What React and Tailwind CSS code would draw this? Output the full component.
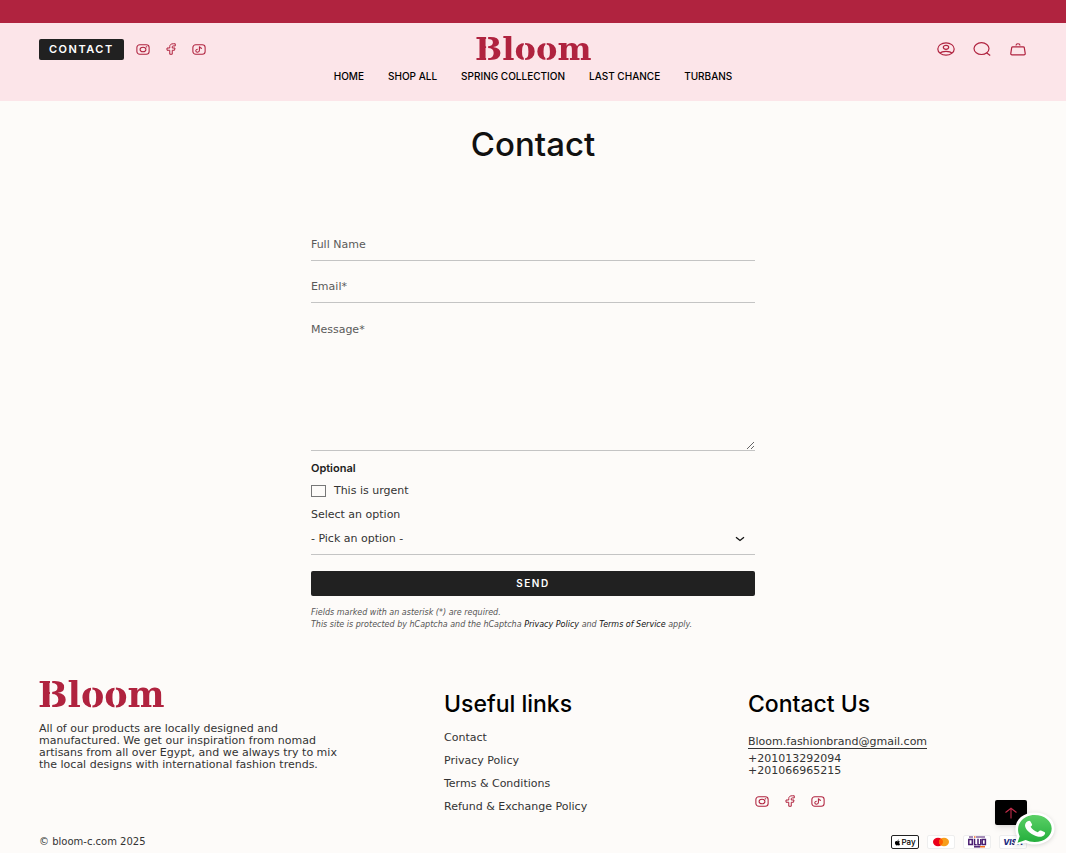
import React from "react";
import { FaApple } from "react-icons/fa";

const BRAND = "#b0233f";

function Logo({ className }) {
  return (
    <svg viewBox="0 0 124 28" className={`overflow-visible ${className}`} role="img" aria-label="Bloom">
      <mask id="stencil" maskUnits="userSpaceOnUse" x="-4" y="-8" width="140" height="46">
        <rect x="-4" y="-8" width="140" height="46" fill="#fff" />
        <rect x="11" y="-2" width="2.2" height="32" fill="#000" />
        <rect x="52" y="-2" width="1.4" height="32" fill="#000" />
        <rect x="75.500" y="-2" width="1.4" height="32" fill="#000" />
      </mask>
      <g mask="url(#stencil)">
        <text
          x="-1"
          y="26"
          fill={BRAND}
          fontFamily="DejaVu Serif, serif"
          fontWeight="700"
          fontSize="35"
        >
          Bloom
        </text>
      </g>
    </svg>
  );
}

function Instagram() {
  return (
    <svg viewBox="0 0 24 20" className="h-[11px] w-[14px]" fill="none" stroke={BRAND} strokeWidth="1.8" preserveAspectRatio="none">
      <rect x="1.5" y="1.5" width="21" height="17" rx="5" />
      <ellipse cx="12" cy="10" rx="5" ry="4.2" />
      <circle cx="18" cy="5" r="0.4" />
    </svg>
  );
}

function Facebook() {
  return (
    <svg viewBox="0 0 20 24" className="h-3 w-[10px]" fill="none" stroke={BRAND} strokeWidth="2" strokeLinejoin="round" preserveAspectRatio="none">
      <path d="M18.5 1.5h-4C10 1.500 7.500 3.500 7.500 7v3H2v4.500h5.500v8h5v-8H17l1-4.500h-5.500V7.500c0-1 .8-1.600 2-1.600h4z" />
    </svg>
  );
}

function Tiktok() {
  return (
    <svg viewBox="0 0 24 20" className="h-[11px] w-[14px]" fill="none" stroke={BRAND} strokeWidth="1.8" preserveAspectRatio="none">
      <rect x="1.500" y="1.500" width="21" height="17" rx="5" />
      <path d="M9.800 9.500C7.500 9.500 6.500 11 6.500 12.400c0 1.500 1.200 2.600 3 2.600 2 0 3.200-1.200 3.200-3V4.500c.5 2.200 2 3.400 4.500 3.500" />
    </svg>
  );
}

function Socials({ className }) {
  return (
    <div className={`flex items-center ${className}`}>
      <a href="#instagram" aria-label="Instagram"><Instagram /></a>
      <a href="#facebook" aria-label="Facebook"><Facebook /></a>
      <a href="#tiktok" aria-label="TikTok"><Tiktok /></a>
    </div>
  );
}

function Header() {
  return (
    <header className="bg-[#fce5e9] px-[39px] pt-[13px] pb-[18px] font-['Inter',sans-serif]">
      <div className="grid grid-cols-[1fr_auto_1fr] items-center">
        <div className="flex items-center gap-3">
          <a
            href="#contact"
            className="flex h-[21px] items-center rounded-xs bg-[#212121] px-[10px] text-[11px] font-semibold tracking-[1.5px] text-white"
          >
            CONTACT
          </a>
          <Socials className="gap-4" />
        </div>
        <a href="#home"><Logo className="h-[26px] w-[114px]" /></a>
        <div className="flex items-center justify-end gap-[18px]">
          <a href="#account" aria-label="Account">
            <svg viewBox="0 0 18 14" className="h-[14px] w-[18px]" fill="none" stroke={BRAND} strokeWidth="1.2">
              <ellipse cx="9" cy="7" rx="8.200" ry="6.200" />
              <ellipse cx="9" cy="5.300" rx="2.700" ry="2" />
              <path d="M3 11.200C5 8.800 13 8.800 15 11.200" />
            </svg>
          </a>
          <button type="button" aria-label="Search">
            <svg viewBox="0 0 18 14" className="h-[14px] w-[18px]" fill="none" stroke={BRAND} strokeWidth="1.2">
              <ellipse cx="8.500" cy="6.600" rx="7.500" ry="5.900" />
              <path d="M13.500 10.800L17.200 13.500" />
            </svg>
          </button>
          <button type="button" aria-label="Cart">
            <svg viewBox="0 0 18 14" className="h-[14px] w-[18px]" fill="none" stroke={BRAND} strokeWidth="1.2" strokeLinejoin="round">
              <path d="M3.800 4.800h10.400c.7 0 1 .3 1.100.9l.9 5.700c.1.900-.3 1.400-1.200 1.400H3c-.9 0-1.300-.5-1.200-1.400l.9-5.700c.1-.6.4-.9 1.100-.9z" />
              <path d="M7 3.400C7 1.200 11 1.200 11 3.400" />
            </svg>
          </button>
        </div>
      </div>
      <nav className="mt-[7px] flex justify-center gap-6 text-[10px] leading-[14px] font-medium text-black">
        <a href="#home">HOME</a>
        <a href="#shop">SHOP ALL</a>
        <a href="#spring">SPRING COLLECTION</a>
        <a href="#last">LAST CHANCE</a>
        <a href="#turbans">TURBANS</a>
      </nav>
    </header>
  );
}

const field =
  "block w-full border-b border-[#c4c4c4] bg-transparent text-[11px] leading-4 outline-none placeholder:text-[#5a5a5a] placeholder:opacity-100";

function ContactForm() {
  return (
    <form className="mx-auto mt-[66px] w-5/12 min-w-[300px]" onSubmit={(e) => e.preventDefault()}>
      <input aria-label="Full Name" type="text" placeholder="Full Name" className={`${field} h-8`} />
      <input aria-label="Email" type="email" placeholder="Email*" className={`${field} mt-[10px] h-8`} />
      <textarea aria-label="Message" placeholder="Message*" className={`${field} mt-[10px] h-[138px] resize-y pt-[9px]`} />
      <p className="mt-[9px] font-['Inter',sans-serif] text-[11px] leading-4 font-semibold text-[#212121]">Optional</p>
      <div className="mt-[7px] flex items-center gap-2">
        <input
          id="urgent"
          type="checkbox"
          className="h-3 w-[15px] appearance-none border border-[#777777] bg-transparent checked:bg-[#212121]"
        />
        <label htmlFor="urgent" className="text-[11px] leading-4">This is urgent</label>
      </div>
      <label htmlFor="option" className="mt-2 block text-[11px] leading-4">Select an option</label>
      <div className="relative">
        <select id="option" className={`${field} h-8 appearance-none`}>
          <option>- Pick an option -</option>
        </select>
        <svg viewBox="0 0 10 6" className="pointer-events-none absolute top-[13px] right-[10px] h-[6px] w-[10px]" fill="none" stroke="#111" strokeWidth="1.3">
          <path d="M1 1.200L5 4.500L9 1.200" />
        </svg>
      </div>
      <button type="submit" className="mt-4 h-[25px] w-full rounded-xs bg-[#212121] font-['Inter',sans-serif] text-[10px] font-semibold tracking-[1.5px] text-white">
        SEND
      </button>
      <p className="mt-[11px] text-[8px] leading-[12px] text-[#555] italic">
        Fields marked with an asterisk (*) are required.
        <br />
        This site is protected by hCaptcha and the hCaptcha{" "}
        <a href="#privacy" className="text-[#111]">Privacy Policy</a> and{" "}
        <a href="#terms" className="text-[#111]">Terms of Service</a> apply.
      </p>
    </form>
  );
}

function Payments() {
  return (
    <div className="flex items-center gap-2 font-['Inter',sans-serif]">
      <span className="flex h-[14px] w-7 items-center justify-center rounded-xs border border-[#222] bg-white text-[8px] font-medium text-black">
        <FaApple className="h-[7px] w-[7px]" />
        Pay
      </span>
      <svg viewBox="0 0 28 14" className="h-[14px] w-7" role="img" aria-label="Mastercard">
        <rect x="0.500" y="0.500" width="27" height="13" rx="1.500" fill="#fff" stroke="#eeeeee" />
        <ellipse cx="11" cy="7" rx="5" ry="4.200" fill="#eb001b" />
        <ellipse cx="17" cy="7" rx="5" ry="4.200" fill="#f79e1b" />
        <path d="M14 3.600c2.700 1.800 2.700 5 0 6.800-2.700-1.800-2.700-5 0-6.800z" fill="#ff5f00" />
      </svg>
      <svg viewBox="0 0 28 14" className="h-[14px] w-7" role="img" aria-label="Meeza">
        <rect x="0.500" y="0.500" width="27" height="13" rx="1.500" fill="#fff" stroke="#eeeeee" />
        <g fill="none" stroke="#4a1d70" strokeWidth="1.500">
          <path d="M6 2h4M13 2h9" strokeWidth="1" />
          <rect x="5.800" y="4.500" width="3.500" height="5" />
          <path d="M11.500 3.800v6h2.200M15 3.800v6h2.800M17.800 4v5.800" />
          <rect x="19.200" y="4.500" width="3.200" height="5" />
          <path d="M11 11.800h6" />
        </g>
        <path d="M17 11.800h5M11 2h1.500" stroke="#f26b21" strokeWidth="1.500" />
      </svg>
      <span className="flex h-[14px] w-7 items-center justify-center rounded-xs border border-[#eeeeee] bg-white text-[8px] font-extrabold text-[#1a2b80] italic">
        VISA
      </span>
    </div>
  );
}

const heading = "font-['Inter',sans-serif] text-[23px] leading-6 font-medium text-black";

function Footer() {
  return (
    <footer className="px-[39px] pt-[50px] pb-1">
      <div className="grid grid-cols-[405fr_304fr_279fr]">
        <div>
          <Logo className="h-7 w-[124px]" />
          <p className="mt-[14px] max-w-[300px] text-[11px] leading-[12px]">
            All of our products are locally designed and manufactured. We get our inspiration from nomad artisans from all over Egypt, and we always try to mix the local designs with international fashion trends.
          </p>
        </div>
        <div className="pt-[11px]">
          <h2 className={heading}>Useful links</h2>
          <ul className="mt-[14px] flex flex-col gap-[7px] text-[11px] leading-4">
            <li><a href="#contact">Contact</a></li>
            <li><a href="#privacy">Privacy Policy</a></li>
            <li><a href="#terms">Terms &amp; Conditions</a></li>
            <li><a href="#refund">Refund &amp; Exchange Policy</a></li>
          </ul>
        </div>
        <div className="pt-[11px]">
          <h2 className={heading}>Contact Us</h2>
          <div className="mt-5 text-[11px] leading-[12px]">
            <a href="mailto:Bloom.fashionbrand@gmail.com" className="inline-block border-b border-[#333]">
              Bloom.fashionbrand@gmail.com
            </a>
            <p className="mt-1">+201013292094</p>
            <p>+201066965215</p>
          </div>
          <Socials className="mt-[18px] gap-4 pl-[7px]" />
        </div>
      </div>
      <div className="mt-5 flex items-center justify-between">
        <p className="text-[10px] leading-[14px]">© bloom-c.com 2025</p>
        <Payments />
      </div>
    </footer>
  );
}

function FloatingActions() {
  return (
    <>
      <button
        type="button"
        aria-label="Back to top"
        className="fixed right-[39px] bottom-7 flex h-[25px] w-8 items-center justify-center rounded-xs bg-black shadow-md"
      >
        <svg viewBox="0 0 14 12" className="h-3 w-[14px]" fill="none" stroke="#c22d4a" strokeWidth="1.100">
          <path d="M7 11.500V1.500M1.500 5.500L7 1.300l5.500 4.200" />
        </svg>
      </button>
      <a href="#whatsapp" aria-label="WhatsApp" className="fixed right-[11px] bottom-[7px] drop-shadow-sm">
        <svg viewBox="0 0 42 34" className="h-[34px] w-[42px]">
          <defs>
            <linearGradient id="wa" x1="0" y1="0" x2="0" y2="1">
              <stop offset="0" stopColor="#5bd066" />
              <stop offset="1" stopColor="#23ae3c" />
            </linearGradient>
          </defs>
          <path d="M1 33.500l3-9C-1.500 11 8 .5 21.500.5 33 .5 41.500 7.500 41.500 16.500S33 32.500 21.500 32.500c-3.500 0-6.500-.6-9.200-1.800z" fill="#fff" />
          <path d="M4.500 30.800l2.200-6.600C1.500 13 10 3 21.500 3 31.500 3 38.700 9 38.700 16.500S31.500 30 21.500 30c-3.300 0-6.200-.7-8.800-2z" fill="url(#wa)" />
          <path d="M14.600 9.300c1.300-.8 2.300-.7 2.900.3l1.500 2.600c.4.800-.1 1.500-1.400 2.600 1.500 2.600 4 4.300 7.200 5.500 1.500-1.600 2.200-2.200 3.200-1.800l3.400 1.500c1.100.6.9 1.600-.1 2.900-1.400 1.700-4 2.200-6.800 1.500-6.200-1.700-10.700-5.400-12.200-9.400-.8-2.300.2-4.500 2.300-5.700z" fill="#fff" />
        </svg>
      </a>
    </>
  );
}

export default function App() {
  return (
    <div className="min-h-screen bg-[#fdfbf9] font-['DejaVu_Sans',sans-serif] text-[#333]">
      <div className="h-[23px] bg-[#b0233f]" />
      <Header />
      <main>
        <h1 className="mt-6 text-center font-['Inter',sans-serif] text-[33px] leading-[38px] font-medium text-[#111]">Contact</h1>
        <ContactForm />
      </main>
      <Footer />
      <FloatingActions />
    </div>
  );
}
